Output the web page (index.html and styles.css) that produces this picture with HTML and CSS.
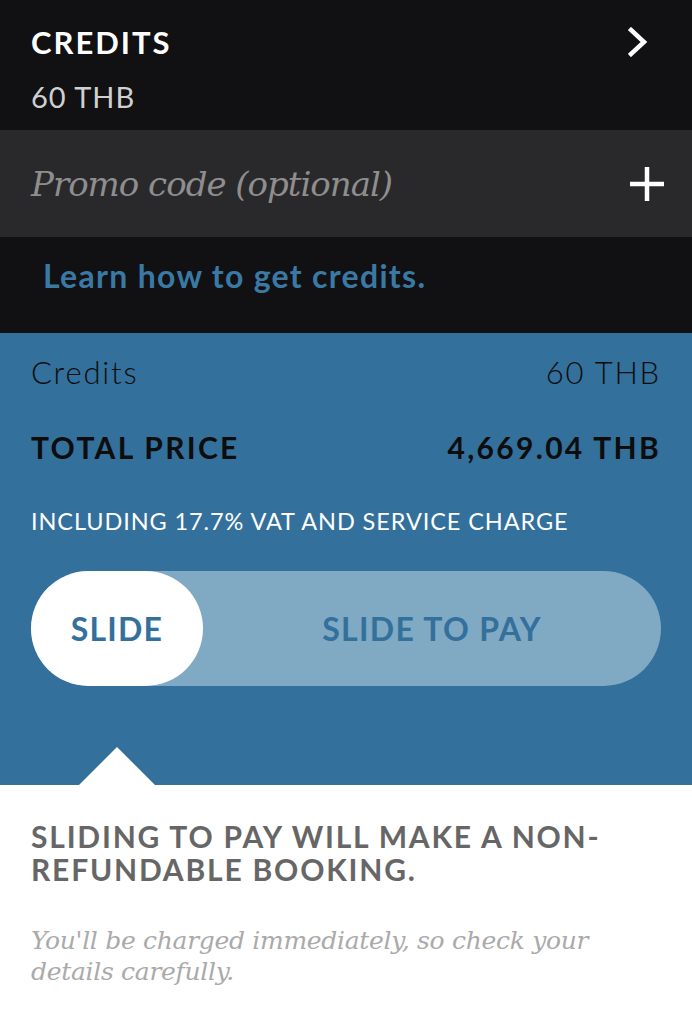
FILE: index.html
```html
<!DOCTYPE html>
<html lang="en">
<head>
    <meta charset="UTF-8">
    <meta name="viewport" content="width=device-width, initial-scale=1.0">
    <title>Checkout - Slide to pay</title>
    <link rel="stylesheet" href="styles.css">
</head>
<body>

    <div class="credits-head">
        <div class="credits-top">
            <h1>CREDITS</h1>
            <svg class="chevron" width="20" height="30" viewBox="0 0 20 30">
                <path d="M3 3 L16 15 L3 27" fill="none" stroke="#fff" stroke-width="4.5" stroke-linecap="square"/>
            </svg>
        </div>
        <p class="credits-amount">60 THB</p>
    </div>

    <div class="promo">
        <span class="promo-text">Promo code (optional)</span>
        <svg class="plus" width="34" height="34" viewBox="0 0 34 34">
            <path d="M17 0 V34 M0 17 H34" stroke="#fff" stroke-width="4.5"/>
        </svg>
    </div>

    <div class="learn">
        <a href="#">Learn how to get credits.</a>
    </div>

    <div class="summary">
        <div class="row">
            <span>Credits</span>
            <span>60 THB</span>
        </div>
        <div class="row total">
            <span>TOTAL PRICE</span>
            <span>4,669.04 THB</span>
        </div>
        <p class="vat">INCLUDING 17.7% VAT AND SERVICE CHARGE</p>

        <div class="slider">
            <div class="knob">SLIDE</div>
            <div class="slider-label">SLIDE TO PAY</div>
        </div>

        <div class="pointer"></div>
    </div>

    <div class="warning">
        <h2>SLIDING TO PAY WILL MAKE A NON-REFUNDABLE BOOKING.</h2>
        <p>You'll be charged immediately, so check your details carefully.</p>
    </div>

</body>
</html>
```

FILE: styles.css
```css
body {
    margin: 0;
    background-color: #fff;
    font-family: Lato, "Open Sans", sans-serif;
}

.credits-head {
    background-color: #111113;
    padding: 23px 31px 15px 31px;
}
.credits-top {
    display: flex;
    justify-content: space-between;
    align-items: center;
}
.credits-top h1 {
    margin: 0;
    color: #fff;
    font-size: 31px;
    font-weight: 700;
    letter-spacing: 2px;
    line-height: 38px;
}
.chevron {
    margin-right: 13px;
}
.credits-amount {
    margin: 18px 0 0 0;
    color: #d0d0d0;
    font-size: 29px;
    line-height: 36px;
    letter-spacing: 1px;
}

.promo {
    background-color: #29292b;
    height: 107px;
    padding: 0 28px 0 31px;
    display: flex;
    justify-content: space-between;
    align-items: center;
}
.promo-text {
    color: #8e8e8e;
    font-family: "DejaVu Serif", serif;
    font-style: italic;
    font-size: 34px;
    letter-spacing: -1px;
}

.learn {
    background-color: #111113;
    height: 96px;
    box-sizing: border-box;
    padding: 19px 0 0 43px;
}
.learn a {
    color: #3b79a5;
    font-size: 32px;
    line-height: 40px;
    font-weight: 700;
    letter-spacing: 1.3px;
    text-decoration: none;
}

.summary {
    background-color: #33709b;
    padding: 17px 31px 0 31px;
    height: 452px;
    box-sizing: border-box;
    position: relative;
}
.row {
    display: flex;
    justify-content: space-between;
    color: #0d0d0d;
    font-size: 31px;
    font-weight: 300;
    line-height: 44px;
    letter-spacing: 1.8px;
}
.row.total {
    margin-top: 31px;
    font-size: 30px;
    font-weight: 700;
    letter-spacing: 2.3px;
}
.vat {
    margin: 37px 0 0 0;
    color: #fff;
    font-size: 23.5px;
    line-height: 30px;
    letter-spacing: 0.9px;
}
.slider {
    margin-top: 35px;
    height: 115px;
    border-radius: 58px;
    background-color: #80a9c4;
    display: flex;
    align-items: center;
}
.knob {
    width: 172px;
    height: 115px;
    border-radius: 58px;
    background-color: #fff;
    color: #33709b;
    font-size: 32px;
    font-weight: 700;
    letter-spacing: 1.2px;
    display: flex;
    align-items: center;
    justify-content: center;
}
.slider-label {
    flex: 1;
    text-align: center;
    color: #33709b;
    font-size: 32px;
    font-weight: 700;
    letter-spacing: 1.3px;
}
.pointer {
    position: absolute;
    left: 79px;
    bottom: 0;
    width: 0;
    height: 0;
    border-left: 38px solid transparent;
    border-right: 38px solid transparent;
    border-bottom: 38px solid #fff;
}

.warning {
    padding: 35px 31px 20px 31px;
}
.warning h2 {
    margin: 0;
    color: #666;
    font-size: 30px;
    font-weight: 700;
    line-height: 33px;
    letter-spacing: 1.8px;
}
.warning p {
    margin: 39px 0 0 0;
    color: #aaa;
    font-family: "DejaVu Serif", serif;
    font-style: italic;
    font-size: 25px;
    line-height: 31px;
    letter-spacing: -0.3px;
}
```
